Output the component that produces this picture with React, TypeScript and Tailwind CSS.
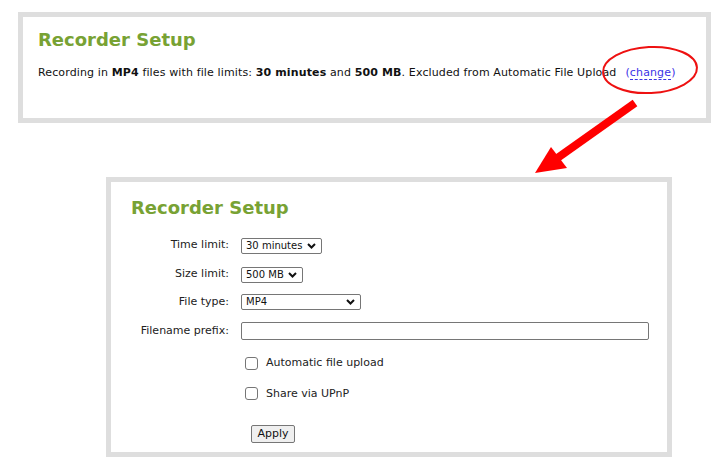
import React from "react";

const font = { fontFamily: '"DejaVu Sans", Verdana, sans-serif' };

function Chevron() {
  return (
    <svg width="9" height="6" viewBox="0 0 9 6" className="shrink-0">
      <path d="M1 1 L4.5 4.5 L8 1" fill="none" stroke="#111" strokeWidth="2" />
    </svg>
  );
}

function FakeSelect({ value, w }: { value: string; w: string }) {
  return (
    <div
      className={`flex h-[16px] items-center justify-between rounded-[2px] border border-[#767676] bg-white pl-[4px] pr-[5px] text-[10px] leading-none text-[#111] ${w}`}
    >
      <span>{value}</span>
      <Chevron />
    </div>
  );
}

function Row({ label, children, h }: { label: string; children: React.ReactNode; h: string }) {
  return (
    <div className={`flex items-center ${h}`}>
      <div className="w-[98px] pr-0 text-right text-[11px] text-[#222]">{label}</div>
      <div className="ml-[12px] flex items-center">{children}</div>
    </div>
  );
}

function Checkbox({ label }: { label: string }) {
  return (
    <div className="flex items-center">
      <div className="h-[13px] w-[13px] rounded-[3px] border border-[#767676] bg-white" />
      <span className="ml-[8px] text-[11px] text-[#222]">{label}</span>
    </div>
  );
}

export default function App() {
  return (
    <div className="relative h-[472px] w-[726px] overflow-hidden bg-white" style={font}>
      <div className="ml-[18px] mt-[12px] h-[111px] w-[693px] border-[5px] border-[#dedede] bg-white pl-[15px] pt-[11px]">
        <div className="text-[18px] font-bold leading-[24px] text-[#78a234]">Recorder Setup</div>
        <div className="mt-[14px] text-[11px] leading-[14px] tracking-[0.13px] text-[#111]">
          Recording in <b>MP4</b> files with file limits: <b>30 minutes</b> and <b>500 MB</b>. Excluded from
          Automatic File Upload
          <span className="ml-[9px] text-[#3b32e6]">
            (<span className="border-b border-dashed border-[#3b32e6]">change</span>)
          </span>
        </div>
      </div>

      <div className="ml-[106px] mt-[54px] h-[280px] w-[566px] border-[5px] border-[#dedede] bg-white pl-[20px] pt-[14px]">
        <div className="text-[18px] font-bold leading-[24px] text-[#78a234]">Recorder Setup</div>
        <div className="mt-[18px] flex flex-col">
          <Row label="Time limit:" h="h-[15px]">
            <FakeSelect value="30 minutes" w="w-[81px]" />
          </Row>
          <div className="h-[14px]" />
          <Row label="Size limit:" h="h-[15px]">
            <FakeSelect value="500 MB" w="w-[62px]" />
          </Row>
          <div className="h-[12px]" />
          <Row label="File type:" h="h-[16px]">
            <FakeSelect value="MP4" w="w-[120px]" />
          </Row>
          <div className="h-[12px]" />
          <Row label="Filename prefix:" h="h-[18px]">
            <div className="h-[18px] w-[408px] rounded-[2px] border border-[#767676] bg-white" />
          </Row>
          <div className="ml-[114px] mt-[15px] flex flex-col gap-[14px]">
            <Checkbox label="Automatic file upload" />
            <Checkbox label="Share via UPnP" />
          </div>
          <div className="ml-[120px] mt-[18px]">
            <div className="inline-flex h-[18px] w-[44px] items-center justify-center rounded-[2px] border border-[#767676] bg-[#efefef] text-[11px] text-[#111]">
              Apply
            </div>
          </div>
        </div>
      </div>

      <svg className="pointer-events-none absolute left-0 top-0" width="726" height="472" viewBox="0 0 726 472">
        <ellipse cx="650" cy="70" rx="47" ry="23" fill="none" stroke="#ee1111" strokeWidth="2" transform="rotate(-3 650 70)" />
        <line x1="635" y1="103" x2="556" y2="159" stroke="#ff0000" strokeWidth="8" />
        <polygon points="535,173 551,147 567,168" fill="#ff0000" />
      </svg>
    </div>
  );
}
